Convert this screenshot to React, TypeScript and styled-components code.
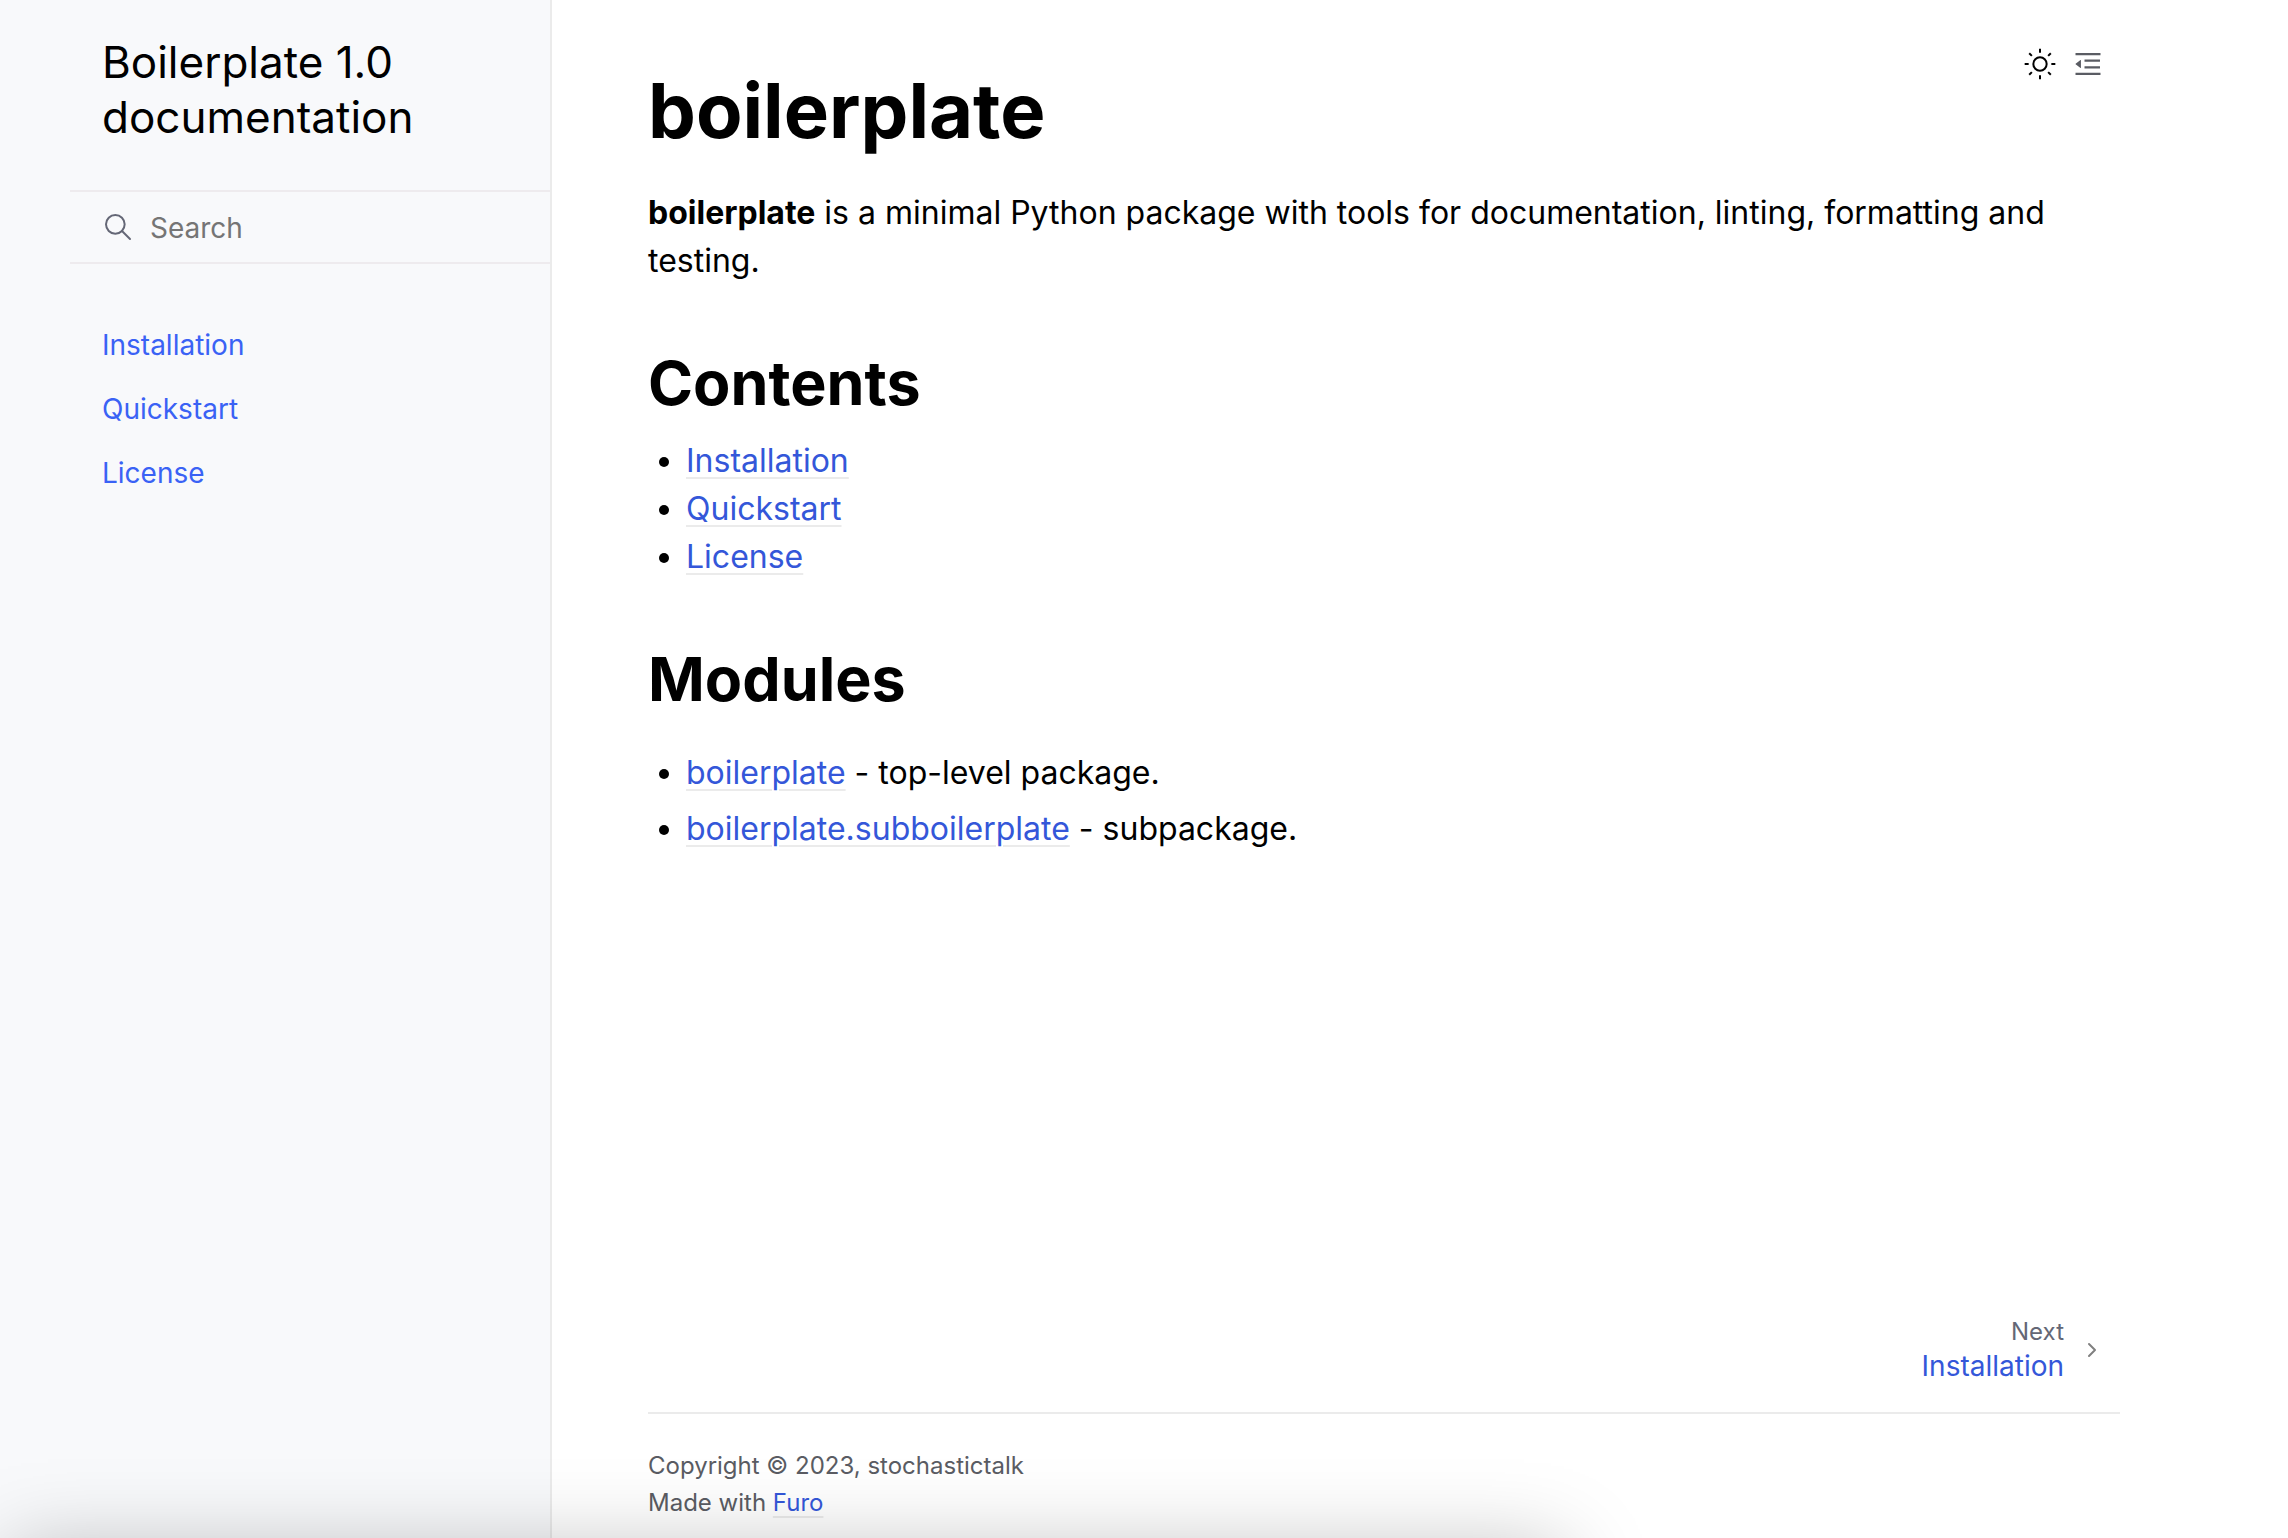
import React from "react";
import styled, { createGlobalStyle } from "styled-components";

const theme = {
  text: "#000000",
  muted: "#5a5c63",
  secondary: "#646776",
  line: "#ebebeb",
  sidebar: "#f8f9fb",
  link: "#3457d9",
  navLink: "#3a62f5",
};

const GlobalStyle = createGlobalStyle`
  *, *::before, *::after { box-sizing: border-box; }
  body {
    margin: 0;
    background: #ffffff;
    color: ${theme.text};
    font-family: Inter, "Liberation Sans", sans-serif;
    font-size: 32px;
    line-height: 48px;
    -webkit-font-smoothing: antialiased;
  }
`;

const Page = styled.div`
  position: relative;
  display: flex;
  min-height: 100vh;
  overflow: hidden;
`;

const Sidebar = styled.aside`
  display: flex;
  flex-shrink: 0;
  justify-content: flex-end;
  width: max(482px, calc(50% - 592px));
  background: ${theme.sidebar};
  border-right: 2px solid ${theme.line};
`;

const SidebarInner = styled.div`
  width: 480px;
`;

const Brand = styled.a`
  display: block;
  padding: 35px 32px 45px;
  color: ${theme.text};
  font-size: 44px;
  line-height: 55px;
  text-decoration: none;
`;

const SearchForm = styled.form`
  display: flex;
  align-items: center;
  gap: 16px;
  height: 74px;
  padding: 0 32px;
  border-top: 2px solid #eeebee;
  border-bottom: 2px solid #eeebee;
  color: ${theme.secondary};
`;

const SearchInput = styled.input`
  flex: 1;
  min-width: 0;
  padding: 2px 0 0;
  border: 0;
  outline: 0;
  background: transparent;
  color: ${theme.text};
  font: inherit;
  font-size: 28px;
  line-height: 36px;
  &::placeholder { color: #757575; opacity: 1; }
`;

const NavList = styled.ul`
  display: flex;
  flex-direction: column;
  margin: 49px 0 0;
  padding: 0;
  list-style: none;
`;

const NavLink = styled.a`
  display: block;
  padding: 14px 32px;
  color: ${theme.navLink};
  font-size: 28px;
  line-height: 36px;
  text-decoration: none;
`;

const Main = styled.main`
  display: flex;
  flex: 1;
  flex-direction: column;
  min-width: 0;
  max-width: 1664px;
  padding: 0 96px 17px;
`;

const Head = styled.div`
  display: flex;
  align-items: flex-start;
  justify-content: space-between;
`;

const Title = styled.h1`
  margin: 60px 0 0;
  font-size: 76px;
  font-weight: 700;
  line-height: 100px;
`;

const Tools = styled.div`
  display: flex;
  gap: 16px;
  padding: 48px 16px 0 0;
`;

const ToolButton = styled.button<{ $color: string }>`
  display: block;
  padding: 0;
  border: 0;
  background: none;
  color: ${(p) => p.$color};
  line-height: 0;
`;

const Intro = styled.p`
  margin: 29px 0 0;
`;

const SectionTitle = styled.h2`
  margin: 58px 0 0;
  font-size: 61px;
  font-weight: 700;
  line-height: 80px;
`;

const List = styled.ul<{ $top: number; $gap: number }>`
  display: flex;
  flex-direction: column;
  gap: ${(p) => p.$gap}px;
  margin: ${(p) => p.$top}px 0 0;
  padding: 0 0 0 38px;
`;

const Link = styled.a`
  color: ${theme.link};
  text-decoration: underline 2px ${theme.line};
  text-underline-offset: 5px;
`;

const Footer = styled.footer`
  margin-top: auto;
`;

const NextLink = styled.a`
  display: flex;
  align-items: center;
  justify-content: flex-end;
  gap: 16px;
  width: max-content;
  margin-left: auto;
  padding: 0 16px 28px 0;
  color: #808080;
  text-decoration: none;
`;

const NextText = styled.span`
  display: flex;
  flex-direction: column;
  align-items: flex-end;
`;

const NextLabel = styled.span`
  color: ${theme.secondary};
  font-size: 24px;
  line-height: 32px;
`;

const NextTitle = styled.span`
  color: ${theme.link};
  font-size: 28px;
  line-height: 36px;
`;

const Credits = styled.div`
  padding-top: 33px;
  border-top: 2px solid ${theme.line};
  color: ${theme.muted};
  font-size: 24px;
  line-height: 37px;
`;

const BottomShadow = styled.div`
  position: absolute;
  top: 100%;
  left: 8px;
  width: 1556px;
  height: 300px;
  margin-top: 12px;
  box-shadow: 0 0 80px rgba(0, 0, 0, 0.26);
  pointer-events: none;
`;

const SearchIcon = () => (
  <svg width="32" height="32" viewBox="0 0 24 24" fill="none" stroke="currentColor" strokeWidth="1.5" strokeLinecap="round" strokeLinejoin="round" aria-hidden="true">
    <circle cx="10" cy="10" r="7" />
    <line x1="21" y1="21" x2="15" y2="15" />
  </svg>
);

const SunIcon = () => (
  <svg width="32" height="32" viewBox="0 0 24 24" fill="none" stroke="currentColor" strokeWidth="1.5" strokeLinejoin="round" aria-hidden="true">
    <circle cx="12" cy="12" r="5" />
    <line x1="12" y1="0.5" x2="12" y2="3.5" />
    <line x1="12" y1="20.5" x2="12" y2="23.5" />
    <line x1="3.9" y1="3.9" x2="5.9" y2="5.9" />
    <line x1="18.1" y1="18.1" x2="20.1" y2="20.1" />
    <line x1="0.5" y1="12" x2="3.5" y2="12" />
    <line x1="20.5" y1="12" x2="23.5" y2="12" />
    <line x1="3.9" y1="20.1" x2="5.9" y2="18.1" />
    <line x1="18.1" y1="5.9" x2="20.1" y2="3.9" />
  </svg>
);

const ContentsIcon = () => (
  <svg width="32" height="32" viewBox="0 0 1024 1024" fill="currentColor" aria-hidden="true">
    <path d="M408 442h480c4.4 0 8-3.6 8-8v-56c0-4.4-3.6-8-8-8H408c-4.4 0-8 3.6-8 8v56c0 4.4 3.6 8 8 8zm-8 204c0 4.4 3.6 8 8 8h480c4.4 0 8-3.6 8-8v-56c0-4.4-3.6-8-8-8H408c-4.4 0-8 3.6-8 8v56zm504-486H120c-4.4 0-8 3.6-8 8v56c0 4.4 3.6 8 8 8h784c4.4 0 8-3.6 8-8v-56c0-4.4-3.6-8-8-8zm0 632H120c-4.4 0-8 3.6-8 8v56c0 4.4 3.6 8 8 8h784c4.4 0 8-3.6 8-8v-56c0-4.4-3.6-8-8-8zM115.4 518.9L271.7 642c5.8 4.6 14.4.5 14.4-6.9V388.9c0-7.4-8.5-11.5-14.4-6.9L115.4 505.1a8.74 8.74 0 0 0 0 13.8z" />
  </svg>
);

const ChevronIcon = () => (
  <svg width="24" height="24" viewBox="0 0 24 24" fill="none" stroke="currentColor" strokeWidth="2" strokeLinecap="round" strokeLinejoin="round" aria-hidden="true">
    <polyline points="9 18 15 12 9 6" />
  </svg>
);

const pages = ["Installation", "Quickstart", "License"];

const modules = [
  { name: "boilerplate", note: "top-level package." },
  { name: "boilerplate.subboilerplate", note: "subpackage." },
];

export default function App() {
  return (
    <>
      <GlobalStyle />
      <Page>
        <Sidebar>
          <SidebarInner>
            <Brand href="#">Boilerplate 1.0 documentation</Brand>
            <SearchForm role="search">
              <SearchIcon />
              <SearchInput type="search" placeholder="Search" aria-label="Search" />
            </SearchForm>
            <nav>
              <NavList>
                {pages.map((page) => (
                  <li key={page}>
                    <NavLink href={`#${page}`}>{page}</NavLink>
                  </li>
                ))}
              </NavList>
            </nav>
          </SidebarInner>
        </Sidebar>
        <Main>
          <Head>
            <Title>boilerplate</Title>
            <Tools>
              <ToolButton type="button" $color={theme.text} aria-label="Toggle theme">
                <SunIcon />
              </ToolButton>
              <ToolButton type="button" $color="#5a5c63" aria-label="Toggle table of contents">
                <ContentsIcon />
              </ToolButton>
            </Tools>
          </Head>
          <Intro>
            <strong>boilerplate</strong> is a minimal Python package with tools for documentation, linting, formatting
            and testing.
          </Intro>
          <section>
            <SectionTitle>Contents</SectionTitle>
            <List $top={14} $gap={0}>
              {pages.map((page) => (
                <li key={page}>
                  <Link href={`#${page}`}>{page}</Link>
                </li>
              ))}
            </List>
          </section>
          <section>
            <SectionTitle>Modules</SectionTitle>
            <List $top={30} $gap={8}>
              {modules.map((m) => (
                <li key={m.name}>
                  <Link href={`#${m.name}`}>{m.name}</Link> - {m.note}
                </li>
              ))}
            </List>
          </section>
          <Footer>
            <NextLink href="#Installation">
              <NextText>
                <NextLabel>Next</NextLabel>
                <NextTitle>Installation</NextTitle>
              </NextText>
              <ChevronIcon />
            </NextLink>
            <Credits>
              <div>Copyright © 2023, stochastictalk</div>
              <div>
                Made with <Link href="#furo">Furo</Link>
              </div>
            </Credits>
          </Footer>
        </Main>
        <BottomShadow />
      </Page>
    </>
  );
}
